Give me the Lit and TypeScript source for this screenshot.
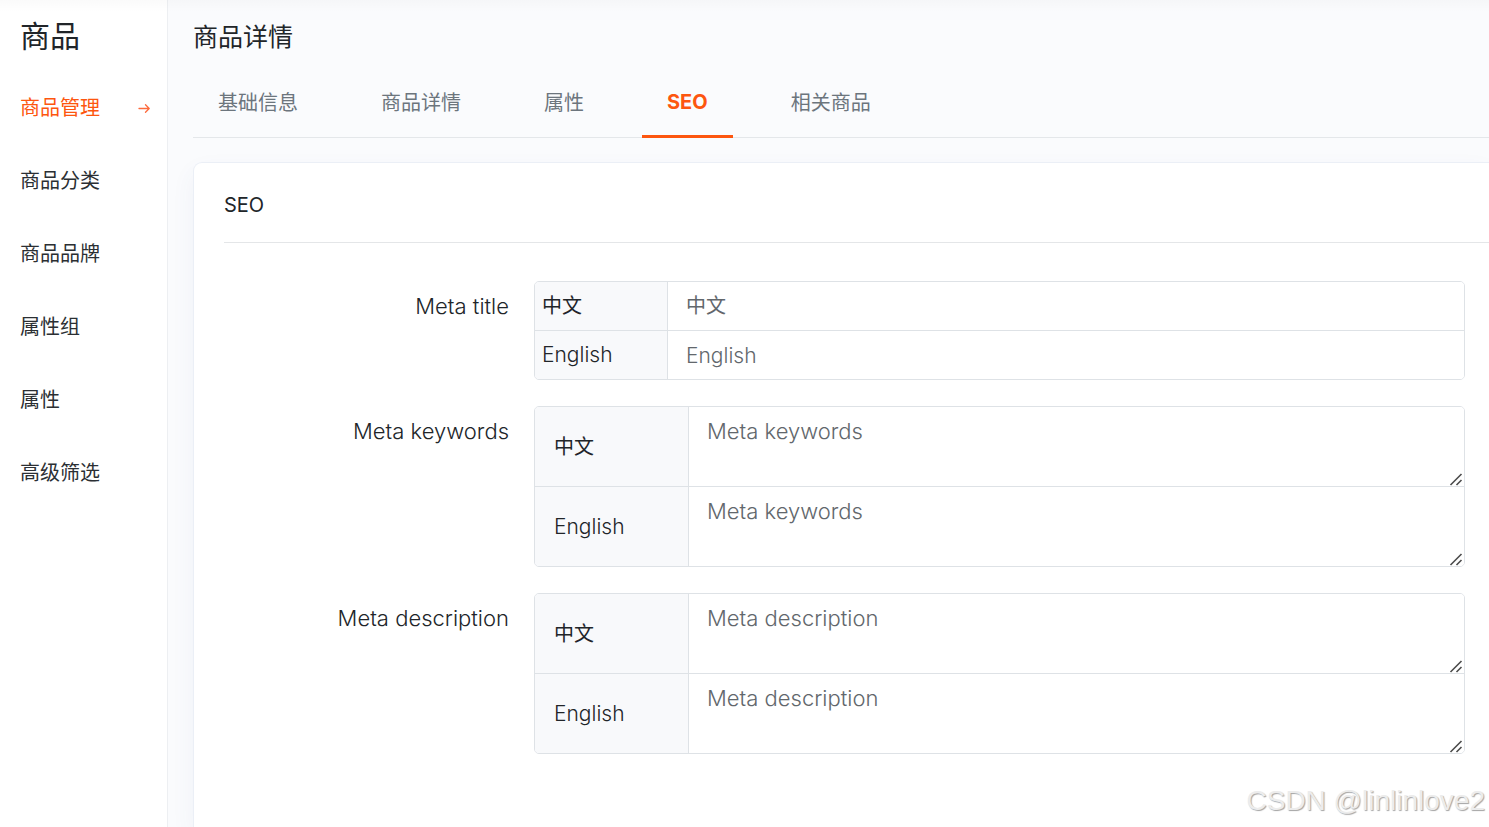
import { LitElement, html, css } from "lit";
import { customElement, property, state } from "lit/decorators.js";
import { classMap } from "lit/directives/class-map.js";

type Locale = { id: string; label: string };

const LOCALES: Locale[] = [
  { id: "zh", label: "中文" },
  { id: "en", label: "English" },
];
const MENU = ["商品管理", "商品分类", "商品品牌", "属性组", "属性", "高级筛选"];
const TABS = ["基础信息", "商品详情", "属性", "SEO", "相关商品"];

/** One form row: a right-aligned label and a stacked group with a field per locale. */
@customElement("locale-field")
export class LocaleField extends LitElement {
  @property() label = "";
  @property({ type: Boolean }) multiline = false;

  static styles = css`
    :host { display: block; }
    .row {
      display: grid;
      grid-template-columns: 285px minmax(0, 1fr);
      column-gap: 25px;
    }
    .name { padding-top: 10px; font-size: 22px; line-height: 30px; text-align: right; }
    .group { border: 1px solid #dee2e6; border-radius: 5px; overflow: hidden; }
    .line { display: flex; font-size: 21px; }
    .line.zh { font-size: 20px; font-weight: 400; }
    .line + .line { border-top: 1px solid #dee2e6; }
    .tag {
      box-sizing: border-box;
      display: flex;
      align-items: center;
      flex: none;
      width: 133px;
      padding: 0 7px;
      background: #f8f9fb;
      border-right: 1px solid #dee2e6;
      line-height: 30px;
    }
    .tag.wide { width: 154px; padding: 0 19px; }
    .box { position: relative; display: flex; flex: 1; min-width: 0; }
    .control {
      box-sizing: border-box;
      flex: 1;
      min-width: 0;
      margin: 0;
      border: 0;
      outline: 0;
      background: #fff;
      color: #212529;
      font: inherit;
      line-height: 30px;
      padding: 9px 18px;
      height: 48px;
    }
    .control::placeholder { color: #62676c; opacity: 1; }
    .control:focus { background: #fffaf7; }
    .area { height: 79px; resize: vertical; font-size: 22px; font-weight: 300; }
    .area::-webkit-resizer { display: none; }
    .grip { position: absolute; right: 1px; bottom: 0; pointer-events: none; }
  `;

  private control(locale: Locale) {
    if (!this.multiline) {
      return html`<input class="control" id=${locale.id} type="text" placeholder=${locale.label} />`;
    }
    return html`
      <textarea class="control area" id=${locale.id} placeholder=${this.label}></textarea>
      <svg class="grip" width="14" height="14" viewBox="0 0 14 14" fill="none" stroke="#4d4d4d" stroke-width="1.6" aria-hidden="true">
        <path d="M1.5 13 12.5 2M7.5 13 12.5 8" />
      </svg>`;
  }

  render() {
    return html`
      <div class="row" role="group" aria-labelledby="name">
        <div class="name" id="name">${this.label}</div>
        <div class="group">
          ${LOCALES.map(
            (locale) => html`
              <div class=${classMap({ line: true, zh: locale.id === "zh" })}>
                <label class=${classMap({ tag: true, wide: this.multiline })} for=${locale.id}>${locale.label}</label>
                <div class="box">${this.control(locale)}</div>
              </div>`
          )}
        </div>
      </div>`;
  }
}

@customElement("app-root")
export class AppRoot extends LitElement {
  @state() private tab = "SEO";
  @state() private page = "商品管理";

  static styles = css`
    :host {
      position: relative;
      display: flex;
      min-height: 100vh;
      overflow: hidden;
      background: #fafbfd;
      color: #212529;
      font-family: Inter, "Noto Sans CJK SC", sans-serif;
      font-size: 20px;
      font-weight: 300;
    }
    .topshade {
      position: absolute;
      top: 0;
      left: 0;
      right: 0;
      height: 12px;
      background: linear-gradient(rgba(0, 0, 0, 0.02), rgba(0, 0, 0, 0));
      pointer-events: none;
    }
    .sidebar {
      box-sizing: border-box;
      flex: none;
      width: 168px;
      padding-top: 13px;
      background: #fff;
      border-right: 1px solid #edeff2;
    }
    .brand { margin: 0 0 11px; padding-left: 20px; font-size: 30px; line-height: 46px; font-weight: 400; }
    .item {
      display: flex;
      align-items: center;
      justify-content: space-between;
      height: 73px;
      padding: 0 16px 0 20px;
      color: #2b2f33;
      font-weight: 400;
      text-decoration: none;
    }
    .item.on { color: #fd560f; }
    .main { flex: 1; min-width: 0; display: flex; flex-direction: column; padding: 18px 0 0 25px; }
    .title { margin: 0; font-size: 25px; line-height: 38px; font-weight: 400; }
    .tabs { display: flex; gap: 33px; margin-top: 10px; border-bottom: 1px solid #e4e7ea; }
    .tab {
      margin: 0 0 -1px;
      height: 72px;
      padding: 2px 25px 0;
      border: 0;
      border-bottom: 3px solid transparent;
      background: none;
      color: #6c757d;
      font: inherit;
      font-weight: 400;
      cursor: pointer;
    }
    .tab.on { border-color: #fd560f; color: #fd560f; font-weight: 700; }
    .card {
      flex: 1;
      margin-top: 24px;
      padding-left: 30px;
      background: #fff;
      border: 1px solid #ebeff6;
      border-width: 1px 0 0 1px;
      border-radius: 9px 0 0 0;
      box-shadow: 0 10px 25px rgba(60, 80, 150, 0.06);
    }
    .caption {
      margin: 0;
      padding: 27px 0 22px;
      border-bottom: 1px solid #e4e6e8;
      font-size: 20px;
      line-height: 30px;
      font-weight: 400;
    }
    .form { display: flex; flex-direction: column; gap: 26px; padding: 38px 24px 26px 0; }
    .mark {
      position: absolute;
      right: 4px;
      bottom: 9px;
      color: #ececec;
      font-family: "Liberation Sans", sans-serif;
      font-size: 28px;
      font-weight: 400;
      line-height: 34px;
      text-shadow: 1px 1px 1px #a4a4a4;
      pointer-events: none;
    }
  `;

  render() {
    return html`
      <nav class="sidebar">
        <h2 class="brand">商品</h2>
        ${MENU.map(
          (name) => html`
            <a class=${classMap({ item: true, on: name === this.page })} href="#" @click=${(e: Event) => { e.preventDefault(); this.page = name; }}>
              <span>${name}</span>
              ${name === this.page
                ? html`<svg width="14" height="14" viewBox="0 0 14 14" fill="none" stroke="#fd6a3c" stroke-width="1.3" stroke-linecap="round" stroke-linejoin="round" aria-hidden="true">
                    <path d="M2 8.5H12M8.5 4.7 12.2 8.5 8.5 12.3" />
                  </svg>`
                : null}
            </a>`
        )}
      </nav>
      <main class="main">
        <h1 class="title">商品详情</h1>
        <div class="tabs" role="tablist">
          ${TABS.map(
            (name) => html`
              <button
                class=${classMap({ tab: true, on: name === this.tab })}
                role="tab"
                aria-selected=${name === this.tab ? "true" : "false"}
                @click=${() => (this.tab = name)}
              >${name}</button>`
          )}
        </div>
        <section class="card">
          <h2 class="caption">SEO</h2>
          <form class="form">
            <locale-field label="Meta title"></locale-field>
            <locale-field label="Meta keywords" multiline></locale-field>
            <locale-field label="Meta description" multiline></locale-field>
          </form>
        </section>
      </main>
      <div class="topshade"></div>
      <div class="mark">CSDN @linlinlove2</div>
    `;
  }
}
